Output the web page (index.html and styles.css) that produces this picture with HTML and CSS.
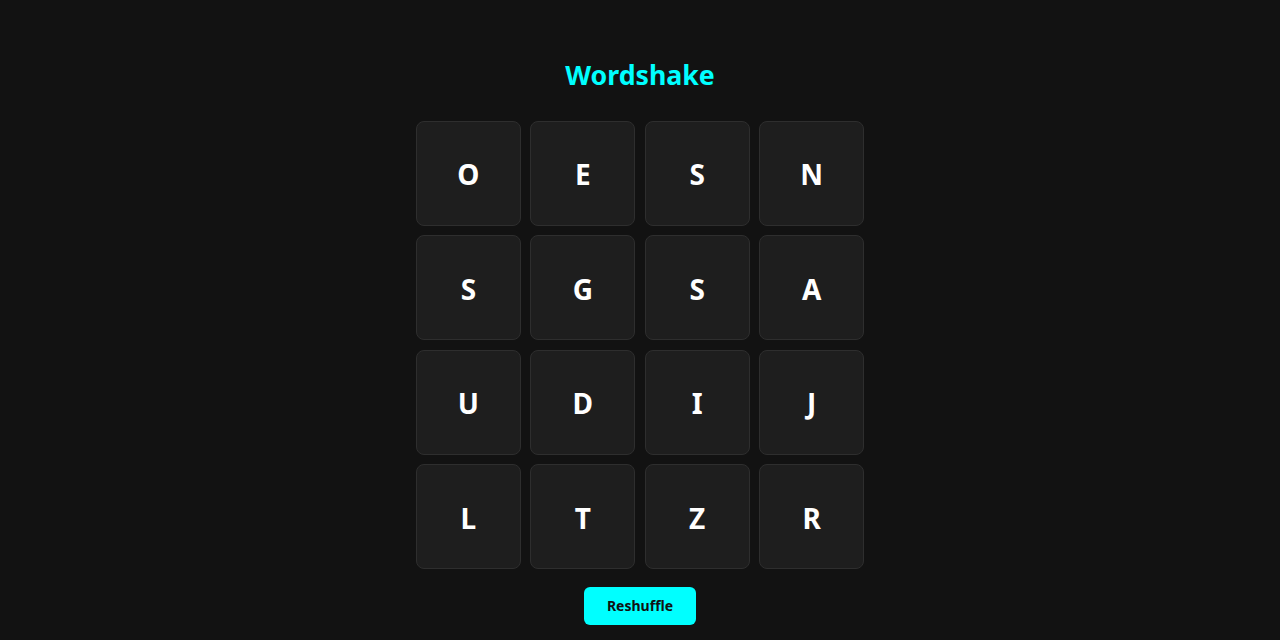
FILE: index.html
```html
<!DOCTYPE html>
<html lang="en">
<head>
<meta charset="utf-8">
<title>Wordshake</title>
<link rel="stylesheet" href="styles.css">
</head>
<body>
<main class="app">
  <h1 class="title">Wordshake</h1>
  <div class="board">
    <div class="tile">O</div><div class="tile">E</div><div class="tile">S</div><div class="tile">N</div>
    <div class="tile">S</div><div class="tile">G</div><div class="tile">S</div><div class="tile">A</div>
    <div class="tile">U</div><div class="tile">D</div><div class="tile">I</div><div class="tile">J</div>
    <div class="tile">L</div><div class="tile">T</div><div class="tile">Z</div><div class="tile">R</div>
  </div>
  <button class="shuffle" type="button">Reshuffle</button>
</main>
</body>
</html>
```
FILE: styles.css
```css
html, body {
  margin: 0;
  padding: 0;
  background: #121212;
  color: #ffffff;
  font-family: "Noto Sans", "Open Sans", sans-serif;
}
.app {
  display: flex;
  flex-direction: column;
  align-items: center;
  padding-top: 56px;
}
.title {
  margin: 0;
  color: #00ffff;
  font-size: 26.7px;
  font-weight: 700;
  line-height: 38px;
}
.board {
  margin-top: 27px;
  width: 448px;
  display: grid;
  grid-template-columns: repeat(4, 1fr);
  grid-auto-rows: 104.8px;
  gap: 9.6px;
}
.tile {
  box-sizing: border-box;
  padding-top: 2px;
  background: #1e1e1e;
  border: 1px solid #2e2e2e;
  border-radius: 8px;
  display: flex;
  align-items: center;
  justify-content: center;
  font-size: 28px;
  font-weight: 700;
  color: #ffffff;
}
.shuffle {
  margin-top: 18px;
  width: 112px;
  height: 38px;
  padding: 0;
  border: none;
  border-radius: 6px;
  background: #00ffff;
  color: #111111;
  font-family: "Noto Sans", "Open Sans", sans-serif;
  font-size: 14px;
  font-weight: 700;
  cursor: pointer;
}
```
